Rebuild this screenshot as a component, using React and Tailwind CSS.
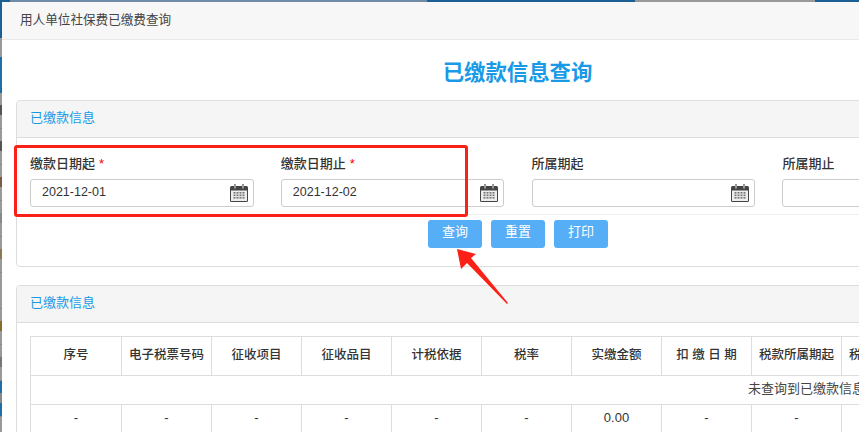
const F = '"Liberation Sans","Noto Sans CJK SC",sans-serif';

function Cal() {
  return (
    <svg width="18" height="18" viewBox="0 0 18 18" className="block">
      <rect x="0" y="2" width="18" height="16" rx="1.5" fill="#444" />
      <rect x="1" y="6.5" width="16" height="10.5" fill="#eee" />
      <rect x="4" y="0" width="2" height="4.5" fill="#999" />
      <rect x="12" y="0" width="2" height="4.5" fill="#999" />
      {[8, 10.5, 13].map((y) =>
        [3.5, 6.5, 9.5, 12.5].map((x) => (
          <rect key={x + "-" + y} x={x} y={y} width="2" height="1.6" fill="#777" />
        ))
      )}
    </svg>
  );
}

function Field({ label, req, value }) {
  return (
    <div className="w-[250.8px] shrink-0">
      <div className="h-[20px] text-[13px] leading-[20px] text-[#333] flex">
        <span className="font-medium">{label}</span>
        {req && <span className="text-[#f00] ml-[4px]">*</span>}
      </div>
      <div className="mt-[5px] w-[223.67px] h-[28px] border border-[#ccc] rounded-[3px] flex items-center justify-between pl-[11px] pr-[5px] text-[12.5px] text-[#333] bg-white">
        <span className="pb-[1px]">{value}</span>
        <Cal />
      </div>
    </div>
  );
}

const heads = ["序号", "电子税票号码", "征收项目", "征收品目", "计税依据", "税率", "实缴金额", "扣 缴 日 期", "税款所属期起", "税款所属期止", "", "", "", "", "", "", ""];
const vals = ["-", "-", "-", "-", "-", "-", "0.00", "-", "-", "-", "", "", "", "", "", "", ""];

function Panel({ children, className }) {
  return (
    <div className={"border border-[#ddd] rounded-[4px] " + className}>
      <div className="h-[37px] bg-[#f5f5f5] border-b border-[#ddd] rounded-t-[4px] pl-[13px] text-[13px] leading-[33px] text-[#1a9ae6]">已缴款信息</div>
      {children}
    </div>
  );
}

const rows = [
  "bg-[#555]", "bg-[#555]", "bg-[#7a5a40]", "bg-[#888]", "bg-[#8a7a50]", "bg-[#999]", "bg-[#8a6a30]", "bg-[#777]", "bg-[#888]",
];

export default function App() {
  return (
    <div className="relative w-[859px] h-[432px] overflow-hidden bg-[#999] pt-[2px] pl-[2px]" style={{ fontFamily: F }}>
      <div className="absolute top-0 left-0 right-0 h-[2px] flex">
        <div className="w-[10px] bg-[#1c5f94]" />
        <div className="w-[417px] bg-[#6f8ba6]" />
        <div className="w-[208px] bg-[#1c5f94]" />
        <div className="w-[180px] bg-[#999]" />
        <div className="flex-1 bg-[#1c5f94]" />
      </div>
      <div className="absolute top-0 left-0 w-[2px] h-[38px] bg-[#1c5f94]" />
      <div className="absolute top-[57px] left-0 w-[2px] h-[36px] bg-[#1c6fa8]" />
      <div className="absolute top-[381px] left-0 w-[2px] h-[36px] bg-[#1c6fa8]" />
      <div className="absolute top-[93px] left-0 w-[2px] flex flex-col">
        {rows.map((c, i) => (
          <div key={i} className="h-[36px] border-b border-[#888] pt-[12px]">
            <div className={"h-[10px] w-[2px] " + c} />
          </div>
        ))}
      </div>

      <div className="relative w-[1031px] h-[430px] bg-white overflow-hidden">
        <div className="h-[38px] bg-[#f7f7f7] border-b border-[#e8e8e8] pl-[18px] text-[12.6px] leading-[36px] text-[#444]">用人单位社保费已缴费查询</div>
        <div className="px-[14px]">
          <h1 className="h-[60px] text-center text-[21.4px] leading-[66px] font-bold text-[#1a9ae6]">已缴款信息查询</h1>
          <Panel className="h-[167px]">
            <div className="px-[13px] pt-[16px]">
              <div className="flex h-[61px] border-b border-[#eee]">
                <Field label="缴款日期起" req value="2021-12-01" />
                <Field label="缴款日期止" req value="2021-12-02" />
                <Field label="所属期起" />
                <Field label="所属期止" />
              </div>
              <div className="flex gap-[9px] mt-[5px] pl-[398px]">
                {["查询", "重置", "打印"].map((t) => (
                  <button key={t} className="w-[54px] h-[28px] bg-[#56aef6] rounded-[3px] text-white text-[13px] leading-[24px] pb-[4px]">{t}</button>
                ))}
              </div>
            </div>
          </Panel>
          <Panel className="mt-[18px] h-[200px]">
            <div className="px-[13px] pt-[13px]">
              <table className="border-collapse table-fixed w-[1552px] text-[12.5px] text-[#333] text-center">
                <colgroup>
                  {heads.map((h, i) => (
                    <col key={i} className={i === 0 ? "w-[91px]" : i === 16 ? "w-[111px]" : "w-[90px]"} />
                  ))}
                </colgroup>
                <tbody>
                  <tr className="h-[39px]">
                    {heads.map((h, i) => (
                      <td key={i} className="border border-[#ddd] p-0 pb-[2px] font-medium whitespace-nowrap">{h}</td>
                    ))}
                  </tr>
                  <tr className="h-[29px]">
                    <td colSpan={17} className="border border-[#ddd] p-0 pb-[2px] text-[13px] text-[#444]">未查询到已缴款信息</td>
                  </tr>
                  <tr className="h-[36px]">
                    {vals.map((v, i) => (
                      <td key={i} className="border border-[#ddd] p-0 pt-[3px] align-top text-[13px] leading-[20px]">{v}</td>
                    ))}
                  </tr>
                </tbody>
              </table>
            </div>
          </Panel>
        </div>
      </div>

      <div className="absolute left-[14px] top-[145px] w-[454px] h-[72px] border-[3px] border-[#fb2117] rounded-[3px]" />
      <svg className="absolute left-[450px] top-[245px]" width="62" height="62" viewBox="0 0 62 62">
        <polygon points="7,4 26,9 21,13 58,58 57,59 17,18 11,24" fill="#fb2117" />
      </svg>
    </div>
  );
}
